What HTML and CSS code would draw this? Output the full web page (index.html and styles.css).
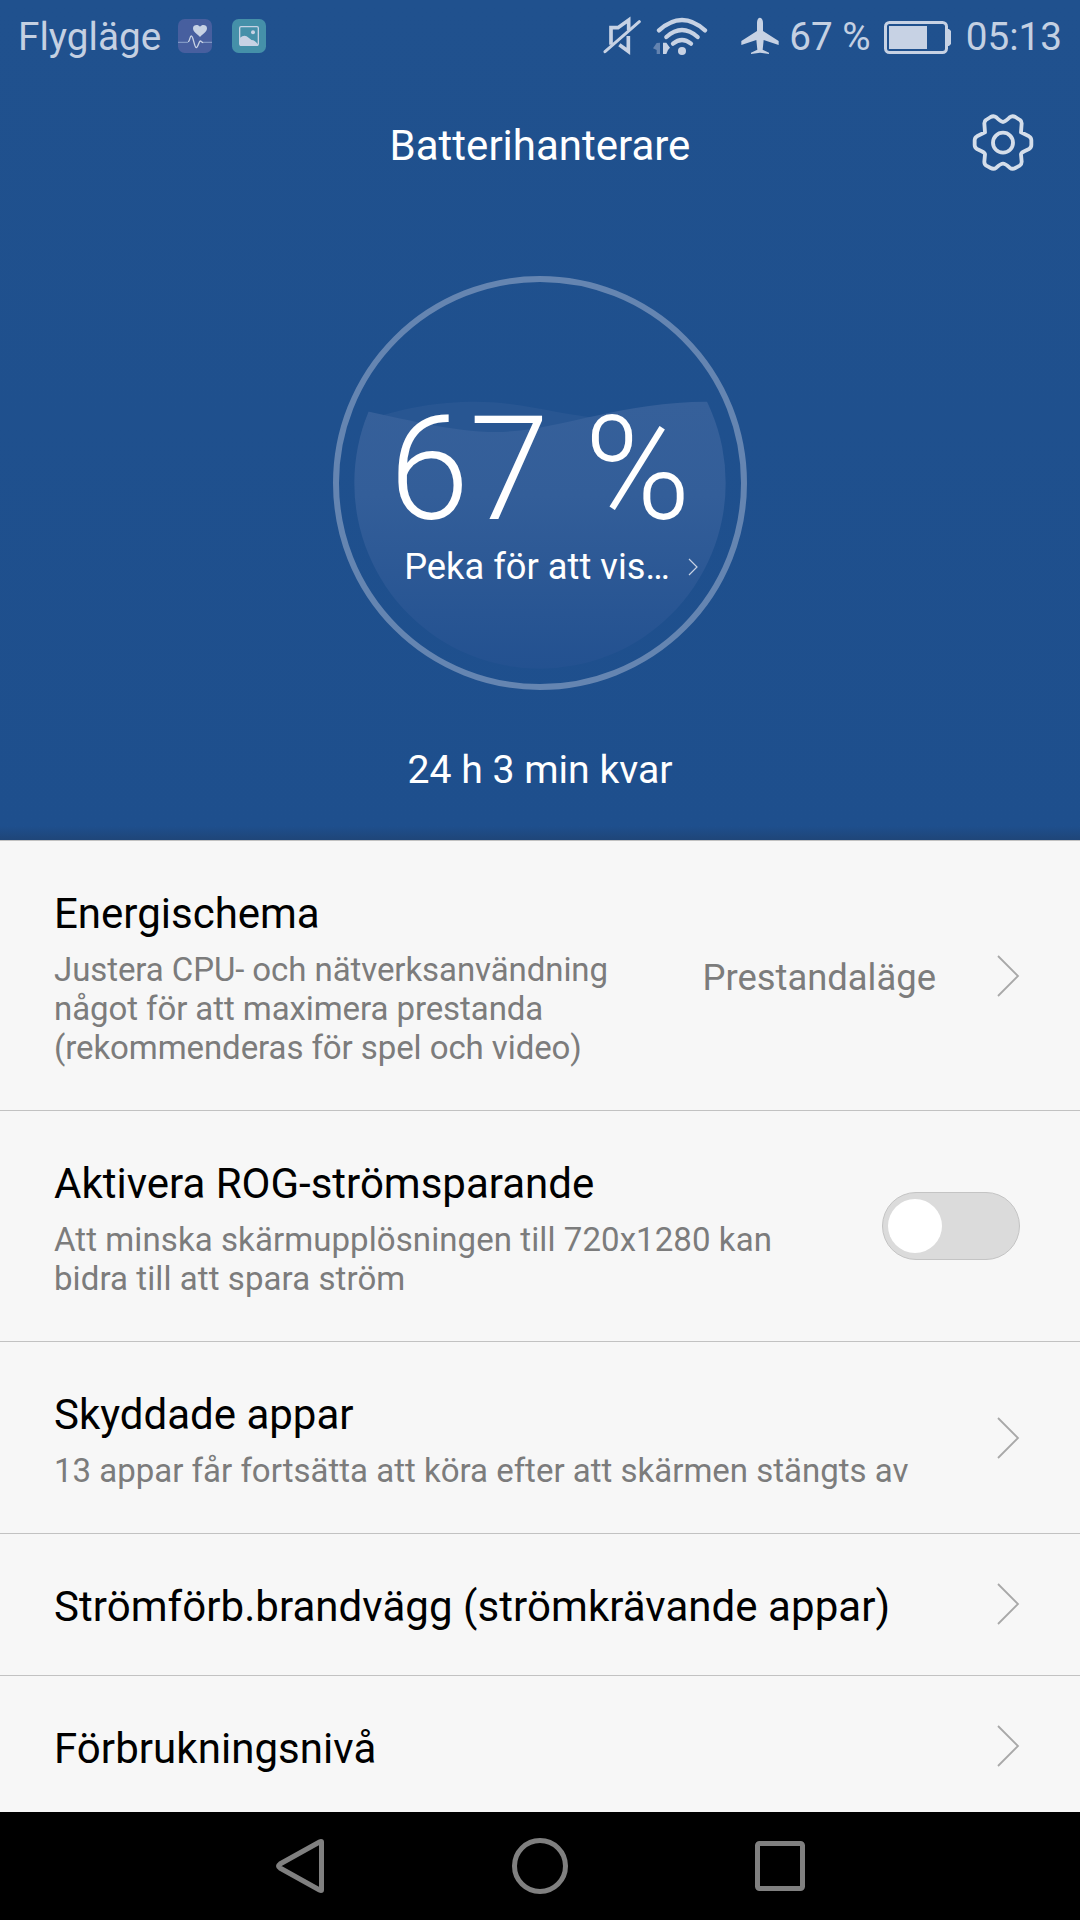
FILE: index.html
```
<!DOCTYPE html>
<html lang="sv">
<head>
    <meta charset="UTF-8">
    <meta name="viewport" content="width=device-width, initial-scale=1.0">
    <title>Batterihanterare</title>
    <link rel="stylesheet" href="styles.css">
</head>
<body>
    <div class="top">
        <div class="status">
            <span class="carrier">Flygläge</span>
            <svg class="app-icon" width="34" height="34" viewBox="0 0 102 102">
                <rect width="102" height="102" rx="20" fill="#475f9f"/>
                <path d="M0 70h30M76 70h26" fill="none" stroke="#7f97c4" stroke-width="4"/>
                <path d="M30 68c6 0 5-17 10-17 6 0 9 35 15 35 5 0 8-20 12-20 3 0 4 4 9 5" fill="none" stroke="#c7d2e4" stroke-width="4"/>
                <path d="M66 54c-9-9-21-15-21-26 0-11 15-13 21-5 6-8 21-6 21 5 0 11-12 17-21 26z" fill="#c7d2e4"/>
            </svg>
            <svg class="app-icon" width="34" height="34" viewBox="0 0 102 102">
                <rect width="102" height="102" rx="20" fill="#4590a9"/>
                <rect x="23" y="23" width="56" height="56" rx="4" fill="none" stroke="#c7d2e4" stroke-width="4"/>
                <circle cx="63" cy="40" r="6" fill="#c7d2e4"/>
                <path d="M24 56q14-12 26 0 8 8 14 8 6 2 14 12v4H24z" fill="#c7d2e4"/>
            </svg>
            <span class="spacer"></span>
            <svg class="mute" width="38" height="40" viewBox="66 48 114 120">
                <path d="M90 134V83h21l32-23v30M142 108v46l-27-20" fill="none" stroke="#c7d2e4" stroke-width="11"/>
                <path d="M72 155L175 65" stroke="#c7d2e4" stroke-width="9" stroke-linecap="round"/>
            </svg>
            <svg class="wifi" width="56" height="40" viewBox="213 48 168 120">
                <g fill="none" stroke="#c7d2e4" stroke-width="13" stroke-linecap="round">
                    <path d="M234 91Q303 29 372 91"/>
                    <path d="M256 111Q303 69 350 111"/>
                    <path d="M276 131Q303 109 330 131"/>
                </g>
                <circle cx="303" cy="153" r="12" fill="#c7d2e4"/>
                <path d="M237 128v34h-10v-12l-11-5 11-16z" fill="#6383b0"/>
                <path d="M246 128h10l11 15-6 7-5 12h-10z" fill="#c7d2e4"/>
            </svg>
            <svg class="plane" width="38" height="38" viewBox="480 51 114 114">
                <path d="M537 53q9 2 9 16v24l47 30v12l-45-15-3 29 19 9v4l-27-4-27 4v-4l19-9-3-29-45 15v-12l47-30V69q0-14 8-16z" fill="#c7d2e4"/>
            </svg>
            <span class="percent">67 %</span>
            <svg class="battery" width="68" height="34" viewBox="0 0 68 34">
                <rect x="1.5" y="1.5" width="61" height="30" rx="4" fill="none" stroke="#c7d2e4" stroke-width="3"/>
                <rect x="5" y="5" width="38" height="23" fill="#c7d2e4"/>
                <path d="M63 8h2l2 2v13l-2 2h-2z" fill="#c7d2e4"/>
            </svg>
            <span class="clock">05:13</span>
        </div>

        <header class="title-bar">
            <h1>Batterihanterare</h1>
            <svg class="gear" width="62" height="60" viewBox="456 336 186 180" fill="none" stroke="#d5deea" stroke-width="11.5" stroke-linejoin="round">
                <path d="M549 366Q556 364 569 352Q577 346 586 351L600 360Q605 363 605 370L603 397L627 409Q634 413 634 421V435Q634 443 627 447L613 454Q603 459 603 463L605 485Q605 493 599 497L586 504Q577 509 569 503Q556 491 549 491Q542 491 529 503Q521 509 512 504L499 497Q493 493 493 485L495 463Q495 459 485 454L471 447Q464 443 464 435V421Q464 413 471 409L495 397L493 370Q493 363 498 360L512 351Q521 346 529 352Q542 364 549 366Z"/>
                <circle cx="549" cy="428" r="30"/>
            </svg>
        </header>

        <div class="gauge">
            <svg class="wave" width="414" height="414" viewBox="39 48 1242 1242">
                <defs>
                    <clipPath id="bowl"><circle cx="660" cy="669" r="557"/></clipPath>
                    <linearGradient id="water" x1="0" y1="425" x2="0" y2="1226" gradientUnits="userSpaceOnUse">
                        <stop offset="0" stop-color="#36609a"/>
                        <stop offset="0.35" stop-color="#335e99"/>
                        <stop offset="1" stop-color="#235190"/>
                    </linearGradient>
                </defs>
                <circle cx="660" cy="669" r="612" fill="none" stroke="#6585b1" stroke-width="18"/>
                <g clip-path="url(#bowl)">
                    <path d="M120 485C250 445 340 425 470 425S720 464 840 474V560H120z" fill="#285692"/>
                    <path d="M100 445C250 475 390 516 530 516C700 516 900 425 1160 425H1250V1240H100z" fill="url(#water)"/>
                </g>
            </svg>
            <div class="level">67 %</div>
            <div class="hint">
                <span>Peka för att vis…</span>
                <svg width="10" height="18" viewBox="0 0 10 18"><path d="M1 1l8 8-8 8" fill="none" stroke="#c7d2e4" stroke-width="1.2"/></svg>
            </div>
        </div>
        <div class="remaining">24 h 3 min kvar</div>
    </div>

    <main class="list">
        <div class="row">
            <div class="text narrow">
                <h2>Energischema</h2>
                <p>Justera CPU- och nätverksanvändning något för att maximera prestanda (rekommenderas för spel och video)</p>
            </div>
            <span class="value">Prestandaläge</span>
            <svg class="chevron" width="24" height="42" viewBox="0 0 24 42"><path d="M2 1l20 20L2 41"/></svg>
        </div>
        <div class="row">
            <div class="text medium">
                <h2>Aktivera ROG-strömsparande</h2>
                <p>Att minska skärmupplösningen till 720x1280 kan bidra till att spara ström</p>
            </div>
            <div class="toggle"><div class="thumb"></div></div>
        </div>
        <div class="row">
            <div class="text">
                <h2>Skyddade appar</h2>
                <p>13 appar får fortsätta att köra efter att skärmen stängts av</p>
            </div>
            <svg class="chevron" width="24" height="42" viewBox="0 0 24 42"><path d="M2 1l20 20L2 41"/></svg>
        </div>
        <div class="row single">
            <h2>Strömförb.brandvägg (strömkrävande appar)</h2>
            <svg class="chevron" width="24" height="42" viewBox="0 0 24 42"><path d="M2 1l20 20L2 41"/></svg>
        </div>
        <div class="row single">
            <h2>Förbrukningsnivå</h2>
            <svg class="chevron" width="24" height="42" viewBox="0 0 24 42"><path d="M2 1l20 20L2 41"/></svg>
        </div>
    </main>

    <nav class="navbar">
        <svg width="60" height="60" viewBox="0 0 60 60"><path d="M51.500 6v48q0 1-2 0L10 32q-3-2 0-4L49.500 6q2-1 2 0z"/></svg>
        <svg width="60" height="60" viewBox="0 0 60 60"><circle cx="30" cy="30" r="25.500"/></svg>
        <svg width="60" height="60" viewBox="0 0 60 60"><rect x="7.500" y="7.500" width="45" height="45" rx="2"/></svg>
    </nav>
</body>
</html>
```
FILE: styles.css
```
* {
    box-sizing: border-box;
}

body {
    margin: 0;
    width: 1080px;
    height: 1920px;
    overflow: hidden;
    display: flex;
    flex-direction: column;
    background-color: #f7f7f7;
    font-family: Roboto, "Noto Sans", sans-serif;
}

h1, h2, p {
    margin: 0;
    font-weight: 400;
}

svg {
    display: block;
    flex: none;
}

.top {
    height: 840px;
    flex: none;
    color: white;
    background: linear-gradient(to bottom, transparent 826px, rgba(32, 60, 100, 0.5) 840px), linear-gradient(#20518e, #1e4f8d);
}

/* Statusfält */
.status {
    display: flex;
    align-items: center;
    height: 72px;
    padding: 0 18px 0 18px;
    color: #c4d0e2;
    font-size: 38.7px;
    line-height: 44px;
    white-space: nowrap;
}

.status span {
    padding-top: 2px;
}

.carrier {
    width: 160px;
}

.app-icon {
    margin-right: 20px;
}

.spacer {
    flex: 1;
}

.mute {
    margin-right: 11px;
}

.wifi {
    margin-right: 33px;
}

.plane {
    margin-right: 10px;
}

.percent {
    margin-right: 13px;
}

.battery {
    margin: 3px 14px 0 0;
}

/* Rubrik */
.title-bar {
    display: flex;
    align-items: center;
    justify-content: center;
    position: relative;
    height: 148px;
}

.title-bar h1 {
    font-size: 42px;
    line-height: 50px;
}

.gear {
    position: absolute;
    right: 46px;
    top: 40px;
}

/* Batterimätare */
.gauge {
    position: relative;
    width: 414px;
    height: 414px;
    margin: 56px auto 0;
    padding-top: 119px;
    text-align: center;
}

.wave {
    position: absolute;
    left: 0;
    top: 0;
}

.level {
    position: relative;
    font-size: 144px;
    font-weight: 300;
    line-height: 150px;
}

.hint {
    position: relative;
    display: flex;
    align-items: center;
    justify-content: center;
    gap: 18px;
    margin-top: 1px;
    padding-left: 22px;
    font-size: 36.3px;
    line-height: 42px;
}

.remaining {
    margin-top: 57px;
    text-align: center;
    font-size: 39.2px;
    line-height: 46px;
}

/* Inställningar */
.list {
    flex: 1;
    overflow: hidden;
    background-color: #f7f7f7;
}

.row {
    display: flex;
    align-items: center;
    justify-content: space-between;
    border-top: 1px solid #c2c2c2;
    padding: 46px 60px 45px 54px;
}

.text {
    padding-top: 2px;
    margin-bottom: -2px;
}

.row h2 {
    color: black;
    font-size: 42px;
    line-height: 49px;
    white-space: nowrap;
}

.row p {
    margin-top: 12px;
    color: #7c7c7c;
    font-size: 33px;
    line-height: 39px;
}

.narrow {
    width: 590px;
}

.narrow p {
    letter-spacing: -0.08px;
}

.medium {
    width: 760px;
}

.medium p {
    letter-spacing: 0.08px;
}

.single {
    height: 142px;
    padding-top: 0;
    padding-bottom: 0;
}

.single h2 {
    padding-top: 4px;
    letter-spacing: 0.06px;
}

.value {
    margin-left: auto;
    margin-right: 60px;
    padding-top: 3px;
    color: #7c7c7c;
    font-size: 36.4px;
}

.chevron {
    margin-bottom: 1px;
}

.chevron path {
    fill: none;
    stroke: #a8a8a8;
    stroke-width: 1.8;
}

.toggle {
    width: 138px;
    height: 68px;
    margin-bottom: 2px;
    padding: 6px 5px;
    border: 1px solid #c4c4c4;
    border-radius: 34px;
    background-color: #dbdbdb;
}

.thumb {
    width: 54px;
    height: 54px;
    border-radius: 50%;
    background-color: white;
}

/* Navigeringsknappar */
.navbar {
    display: flex;
    justify-content: center;
    align-items: center;
    gap: 180px;
    height: 108px;
    flex: none;
    background-color: black;
}

.navbar path,
.navbar circle,
.navbar rect {
    fill: none;
    stroke: #808080;
    stroke-width: 5;
}
```
